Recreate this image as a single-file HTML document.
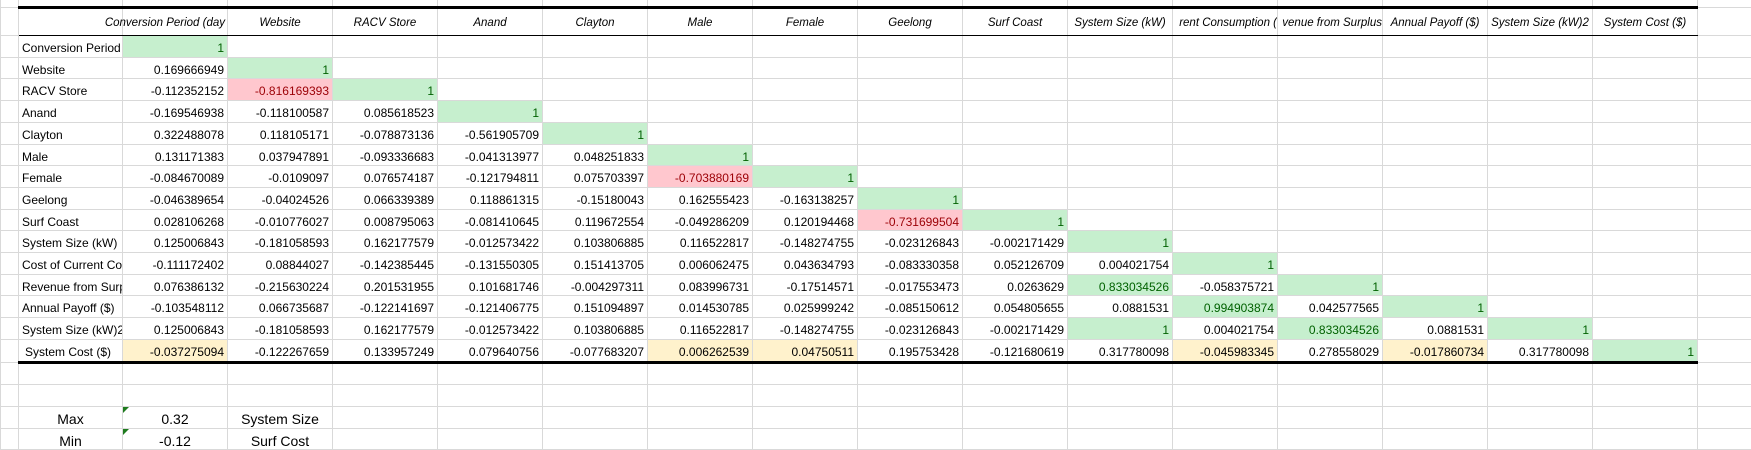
<!DOCTYPE html>
<html><head><meta charset="utf-8"><style>
html,body{margin:0;padding:0;background:#fff;width:1751px;height:450px;overflow:hidden;position:relative}
table{border-collapse:collapse;table-layout:fixed;width:1751px;position:absolute;left:0;top:-15px;font-family:"Liberation Sans",sans-serif;font-size:12px;color:#000}
td{border:1px solid #d9d9d9;padding:0 3px;white-space:nowrap;overflow:hidden;text-align:right;height:20px;line-height:20px}
tr.d td{height:16.7px;padding-top:4px;line-height:16.7px}
td.l{text-align:left}
tr.h td{font-style:italic;text-align:center;border-top:3px solid #000;border-bottom:1px solid #000;height:24px;vertical-align:bottom;padding:0 0 2px 0;font-size:11.5px}
tr.h td.o{border-top:1px solid #d9d9d9;border-bottom:1px solid #d9d9d9}
tr.h td.ov{overflow:visible;position:relative}
.ov span{position:absolute;right:2px;bottom:2px;line-height:20px}
tr.last td{border-bottom:3px solid #000}
tr.last td.o{border-bottom:1px solid #d9d9d9}
.g{background:#c6efce;color:#006100}
.r{background:#ffc7ce;color:#9c0006}
.y{background:#fff2cc}
.big td{font-size:14px;text-align:center}
.tri{position:relative}
.tri:before{content:"";position:absolute;left:0;top:0;border-top:6px solid #1e7b1e;border-right:6px solid transparent}
</style></head><body>
<table>
<colgroup><col style="width:18px"><col style="width:104px"><col style="width:105px"><col style="width:105px"><col style="width:105px"><col style="width:105px"><col style="width:105px"><col style="width:105px"><col style="width:105px"><col style="width:105px"><col style="width:105px"><col style="width:105px"><col style="width:105px"><col style="width:105px"><col style="width:105px"><col style="width:105px"><col style="width:105px"><col style="width:54px"></colgroup>
<tr class="top"><td></td><td></td><td></td><td></td><td></td><td></td><td></td><td></td><td></td><td></td><td></td><td></td><td></td><td></td><td></td><td></td><td></td><td></td></tr>
<tr class="h"><td class="o"></td><td></td><td class="ov"><span>Conversion Period (day</span></td><td>Website</td><td>RACV Store</td><td>Anand</td><td>Clayton</td><td>Male</td><td>Female</td><td>Geelong</td><td>Surf Coast</td><td>System Size (kW)</td><td style="text-align:right">rent Consumption (</td><td style="text-align:right">venue from Surplus</td><td>Annual Payoff ($)</td><td>System Size (kW)2</td><td>System Cost ($)</td><td class="o"></td></tr>
<tr class="d"><td></td><td class="l">Conversion Period</td><td class="g">1</td><td></td><td></td><td></td><td></td><td></td><td></td><td></td><td></td><td></td><td></td><td></td><td></td><td></td><td></td><td></td></tr>
<tr class="d"><td></td><td class="l">Website</td><td>0.169666949</td><td class="g">1</td><td></td><td></td><td></td><td></td><td></td><td></td><td></td><td></td><td></td><td></td><td></td><td></td><td></td><td></td></tr>
<tr class="d"><td></td><td class="l">RACV Store</td><td>-0.112352152</td><td class="r">-0.816169393</td><td class="g">1</td><td></td><td></td><td></td><td></td><td></td><td></td><td></td><td></td><td></td><td></td><td></td><td></td><td></td></tr>
<tr class="d"><td></td><td class="l">Anand</td><td>-0.169546938</td><td>-0.118100587</td><td>0.085618523</td><td class="g">1</td><td></td><td></td><td></td><td></td><td></td><td></td><td></td><td></td><td></td><td></td><td></td><td></td></tr>
<tr class="d"><td></td><td class="l">Clayton</td><td>0.322488078</td><td>0.118105171</td><td>-0.078873136</td><td>-0.561905709</td><td class="g">1</td><td></td><td></td><td></td><td></td><td></td><td></td><td></td><td></td><td></td><td></td><td></td></tr>
<tr class="d"><td></td><td class="l">Male</td><td>0.131171383</td><td>0.037947891</td><td>-0.093336683</td><td>-0.041313977</td><td>0.048251833</td><td class="g">1</td><td></td><td></td><td></td><td></td><td></td><td></td><td></td><td></td><td></td><td></td></tr>
<tr class="d"><td></td><td class="l">Female</td><td>-0.084670089</td><td>-0.0109097</td><td>0.076574187</td><td>-0.121794811</td><td>0.075703397</td><td class="r">-0.703880169</td><td class="g">1</td><td></td><td></td><td></td><td></td><td></td><td></td><td></td><td></td><td></td></tr>
<tr class="d"><td></td><td class="l">Geelong</td><td>-0.046389654</td><td>-0.04024526</td><td>0.066339389</td><td>0.118861315</td><td>-0.15180043</td><td>0.162555423</td><td>-0.163138257</td><td class="g">1</td><td></td><td></td><td></td><td></td><td></td><td></td><td></td><td></td></tr>
<tr class="d"><td></td><td class="l">Surf Coast</td><td>0.028106268</td><td>-0.010776027</td><td>0.008795063</td><td>-0.081410645</td><td>0.119672554</td><td>-0.049286209</td><td>0.120194468</td><td class="r">-0.731699504</td><td class="g">1</td><td></td><td></td><td></td><td></td><td></td><td></td><td></td></tr>
<tr class="d"><td></td><td class="l">System Size (kW)</td><td>0.125006843</td><td>-0.181058593</td><td>0.162177579</td><td>-0.012573422</td><td>0.103806885</td><td>0.116522817</td><td>-0.148274755</td><td>-0.023126843</td><td>-0.002171429</td><td class="g">1</td><td></td><td></td><td></td><td></td><td></td><td></td></tr>
<tr class="d"><td></td><td class="l">Cost of Current Cor</td><td>-0.111172402</td><td>0.08844027</td><td>-0.142385445</td><td>-0.131550305</td><td>0.151413705</td><td>0.006062475</td><td>0.043634793</td><td>-0.083330358</td><td>0.052126709</td><td>0.004021754</td><td class="g">1</td><td></td><td></td><td></td><td></td><td></td></tr>
<tr class="d"><td></td><td class="l">Revenue from Surp</td><td>0.076386132</td><td>-0.215630224</td><td>0.201531955</td><td>0.101681746</td><td>-0.004297311</td><td>0.083996731</td><td>-0.17514571</td><td>-0.017553473</td><td>0.0263629</td><td class="g">0.833034526</td><td>-0.058375721</td><td class="g">1</td><td></td><td></td><td></td><td></td></tr>
<tr class="d"><td></td><td class="l">Annual Payoff ($)</td><td>-0.103548112</td><td>0.066735687</td><td>-0.122141697</td><td>-0.121406775</td><td>0.151094897</td><td>0.014530785</td><td>0.025999242</td><td>-0.085150612</td><td>0.054805655</td><td>0.0881531</td><td class="g">0.994903874</td><td>0.042577565</td><td class="g">1</td><td></td><td></td><td></td></tr>
<tr class="d"><td></td><td class="l">System Size (kW)2</td><td>0.125006843</td><td>-0.181058593</td><td>0.162177579</td><td>-0.012573422</td><td>0.103806885</td><td>0.116522817</td><td>-0.148274755</td><td>-0.023126843</td><td>-0.002171429</td><td class="g">1</td><td>0.004021754</td><td class="g">0.833034526</td><td>0.0881531</td><td class="g">1</td><td></td><td></td></tr>
<tr class="d last"><td class="o"></td><td class="l" style="padding-left:6px">System Cost ($)</td><td class="y">-0.037275094</td><td>-0.122267659</td><td>0.133957249</td><td>0.079640756</td><td>-0.077683207</td><td class="y">0.006262539</td><td class="y">0.04750511</td><td>0.195753428</td><td>-0.121680619</td><td>0.317780098</td><td class="y">-0.045983345</td><td>0.278558029</td><td class="y">-0.017860734</td><td>0.317780098</td><td class="g">1</td><td class="o"></td></tr>
<tr class="d"><td></td><td></td><td></td><td></td><td></td><td></td><td></td><td></td><td></td><td></td><td></td><td></td><td></td><td></td><td></td><td></td><td></td><td></td></tr>
<tr class="d"><td></td><td></td><td></td><td></td><td></td><td></td><td></td><td></td><td></td><td></td><td></td><td></td><td></td><td></td><td></td><td></td><td></td><td></td></tr>
<tr class="d big"><td></td><td>Max</td><td class="tri">0.32</td><td>System Size</td><td></td><td></td><td></td><td></td><td></td><td></td><td></td><td></td><td></td><td></td><td></td><td></td><td></td><td></td></tr>
<tr class="d big"><td></td><td>Min</td><td class="tri">-0.12</td><td>Surf Cost</td><td></td><td></td><td></td><td></td><td></td><td></td><td></td><td></td><td></td><td></td><td></td><td></td><td></td><td></td></tr>
<tr class="d"><td></td><td></td><td></td><td></td><td></td><td></td><td></td><td></td><td></td><td></td><td></td><td></td><td></td><td></td><td></td><td></td><td></td><td></td></tr>
</table>
</body></html>
